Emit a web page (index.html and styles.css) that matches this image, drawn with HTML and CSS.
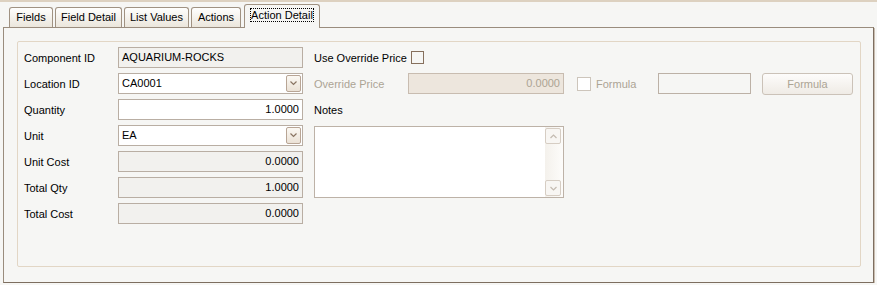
FILE: index.html
```html
<!DOCTYPE html>
<html lang="en">
<head>
<meta charset="utf-8">
<title>Action Detail</title>
<link rel="stylesheet" href="styles.css">
</head>
<body>

<div class="tab_strip">
	<div class="tab tab_fields">Fields</div>
	<div class="tab tab_field_detail">Field Detail</div>
	<div class="tab tab_list_values">List Values</div>
	<div class="tab tab_actions">Actions</div>
	<div class="tab tab_action_detail selected"><span class="focus_text">Action Detail</span></div>
</div>

<div class="tab_panel">
<div class="group_box">

	<div class="column left_column">
		<div class="row">
			<label class="field_label">Component ID</label>
			<div class="field readonly">AQUARIUM-ROCKS</div>
		</div>
		<div class="row">
			<label class="field_label">Location ID</label>
			<div class="field combo">
				<span>CA0001</span>
				<span class="drop_button"><svg width="7" height="5" viewBox="0 0 7 5"><polyline points="0.5,0.5 3.5,3.5 6.5,0.5" fill="none" stroke="#8a7563" stroke-width="1.2"/></svg></span>
			</div>
		</div>
		<div class="row">
			<label class="field_label">Quantity</label>
			<div class="field number">1.0000</div>
		</div>
		<div class="row">
			<label class="field_label">Unit</label>
			<div class="field combo">
				<span>EA</span>
				<span class="drop_button"><svg width="7" height="5" viewBox="0 0 7 5"><polyline points="0.5,0.5 3.5,3.5 6.5,0.5" fill="none" stroke="#8a7563" stroke-width="1.2"/></svg></span>
			</div>
		</div>
		<div class="row">
			<label class="field_label">Unit Cost</label>
			<div class="field readonly number">0.0000</div>
		</div>
		<div class="row">
			<label class="field_label">Total Qty</label>
			<div class="field readonly number">1.0000</div>
		</div>
		<div class="row">
			<label class="field_label">Total Cost</label>
			<div class="field readonly number">0.0000</div>
		</div>
	</div>

	<div class="column right_column">
		<div class="row">
			<label class="field_label">Use Override Price</label>
			<span class="check_box"></span>
		</div>
		<div class="row">
			<label class="field_label disabled_text">Override Price</label>
			<div class="field disabled number override_field">0.0000</div>
			<span class="check_box disabled_box"></span>
			<span class="check_label disabled_text">Formula</span>
			<div class="field formula_field"></div>
			<div class="push_button">Formula</div>
		</div>
		<div class="row">
			<label class="field_label">Notes</label>
		</div>
		<div class="notes_box">
			<div class="notes_text"></div>
			<div class="scroll_bar">
				<span class="scroll_button"><svg width="7" height="5" viewBox="0 0 7 5"><polyline points="0.5,4 3.5,1 6.5,4" fill="none" stroke="#c4bbb1" stroke-width="1.2"/></svg></span>
				<span class="scroll_button"><svg width="7" height="5" viewBox="0 0 7 5"><polyline points="0.5,1 3.5,4 6.5,1" fill="none" stroke="#c4bbb1" stroke-width="1.2"/></svg></span>
			</div>
		</div>
	</div>

</div>
</div>

</body>
</html>
```

FILE: styles.css
```css
html {
background: #f6f6f4;
}

body {
margin: 0;
font: 11px "Liberation Sans", Arial, sans-serif;
color: #000000;
border-top: 2px solid #ddd1c0;
}


/* tabs */


.tab_strip {
display: flex;
align-items: flex-end;
gap: 2px;
height: 25px;
padding-left: 9px;
position: relative;
z-index: 1;
}

.tab {
box-sizing: border-box;
height: 20px;
line-height: 19px;
text-align: center;
white-space: nowrap;
border: 1px solid #a09282;
border-bottom: none;
border-radius: 3px 3px 0 0;
background: linear-gradient(#fefefd, #ebe6dc);
}

/* fixed widths, so the strip lines up like the native control */
.tab_fields { width: 44px; }
.tab_field_detail { width: 67px; }
.tab_list_values { width: 65px; }
.tab_actions { width: 50px; }
.tab_action_detail { width: 76px; }

/* the selected tab is taller and covers the panel border under it */
.tab.selected {
height: 24px;
margin: 0 0 -1px 1px;
line-height: 20px;
background: #f6f6f4;
}

.focus_text {
outline: 1px dotted #000000;
}


/* panel */


.tab_panel {
box-sizing: border-box;
width: 871px;
height: 256px;
margin-left: 3px;
border: 1px solid #9a8c7d;
border-right-color: #7d6e60;
border-bottom-color: #7d6e60;
box-shadow: 1px 1px 0 #c9bdb0;
padding: 13px 0 0 13px;
}

.group_box {
box-sizing: border-box;
width: 844px;
height: 226px;
border: 1px solid #e2d6c5;
border-radius: 2px;
padding: 5px 0 0 6px;
display: flex;
gap: 11px;
}

.column {
display: flex;
flex-direction: column;
gap: 5px;
}

.row {
display: flex;
align-items: center;
height: 21px;
}

.field_label {
width: 94px;
flex: none;
}


/* fields */


.field {
box-sizing: border-box;
width: 185px;
height: 21px;
line-height: 19px;
padding: 0 3px;
border: 1px solid #b9aea3;
background: #ffffff;
white-space: nowrap;
}

.field.readonly {
background: #f2f1ee;
}

.field.number {
text-align: right;
}

.field.disabled {
background: #ede6dd;
border-color: #c8bcb0;
color: #aca494;
}

.combo {
display: flex;
justify-content: space-between;
align-items: center;
padding-right: 1px;
}

.drop_button {
box-sizing: border-box;
width: 15px;
height: 17px;
display: flex;
align-items: center;
justify-content: center;
border: 1px solid #b8a595;
border-radius: 2px;
background: linear-gradient(#fbf8f3, #ebe2d6);
}

.disabled_text {
color: #aca494;
}

.check_box {
box-sizing: border-box;
width: 13px;
height: 13px;
margin-left: 3px;
border: 1px solid #86705d;
background: #f6f6f4;
}

.check_box.disabled_box {
width: 14px;
height: 14px;
margin-left: 13px;
border-color: #cdc5bb;
background: #ffffff;
}

.check_label {
margin-left: 5px;
width: 62px;
}

.override_field {
width: 156px;
}

.formula_field {
width: 93px;
background: #f6f6f4;
border-color: #bcb1a6;
}

.push_button {
box-sizing: border-box;
width: 91px;
height: 22px;
margin: 1px 0 0 11px;
line-height: 20px;
text-align: center;
color: #aca494;
border: 1px solid #cbc2b8;
border-radius: 3px;
background: linear-gradient(#fdfcfb, #efebe5);
}


/* notes */


.notes_box {
box-sizing: border-box;
display: flex;
width: 250px;
height: 72px;
margin-top: 1px;
border: 1px solid #bdb2a7;
background: #ffffff;
}

.notes_text {
flex: 1;
}

.scroll_bar {
width: 17px;
display: flex;
flex-direction: column;
justify-content: space-between;
padding: 1px 1px 1px 0;
background: linear-gradient(to right, #f4f1ec, #fdfcfa);
}

.scroll_button {
box-sizing: border-box;
width: 16px;
height: 16px;
display: flex;
align-items: center;
justify-content: center;
border: 1px solid #d6cdc3;
border-radius: 2px;
background: #f8f6f3;
}
```
